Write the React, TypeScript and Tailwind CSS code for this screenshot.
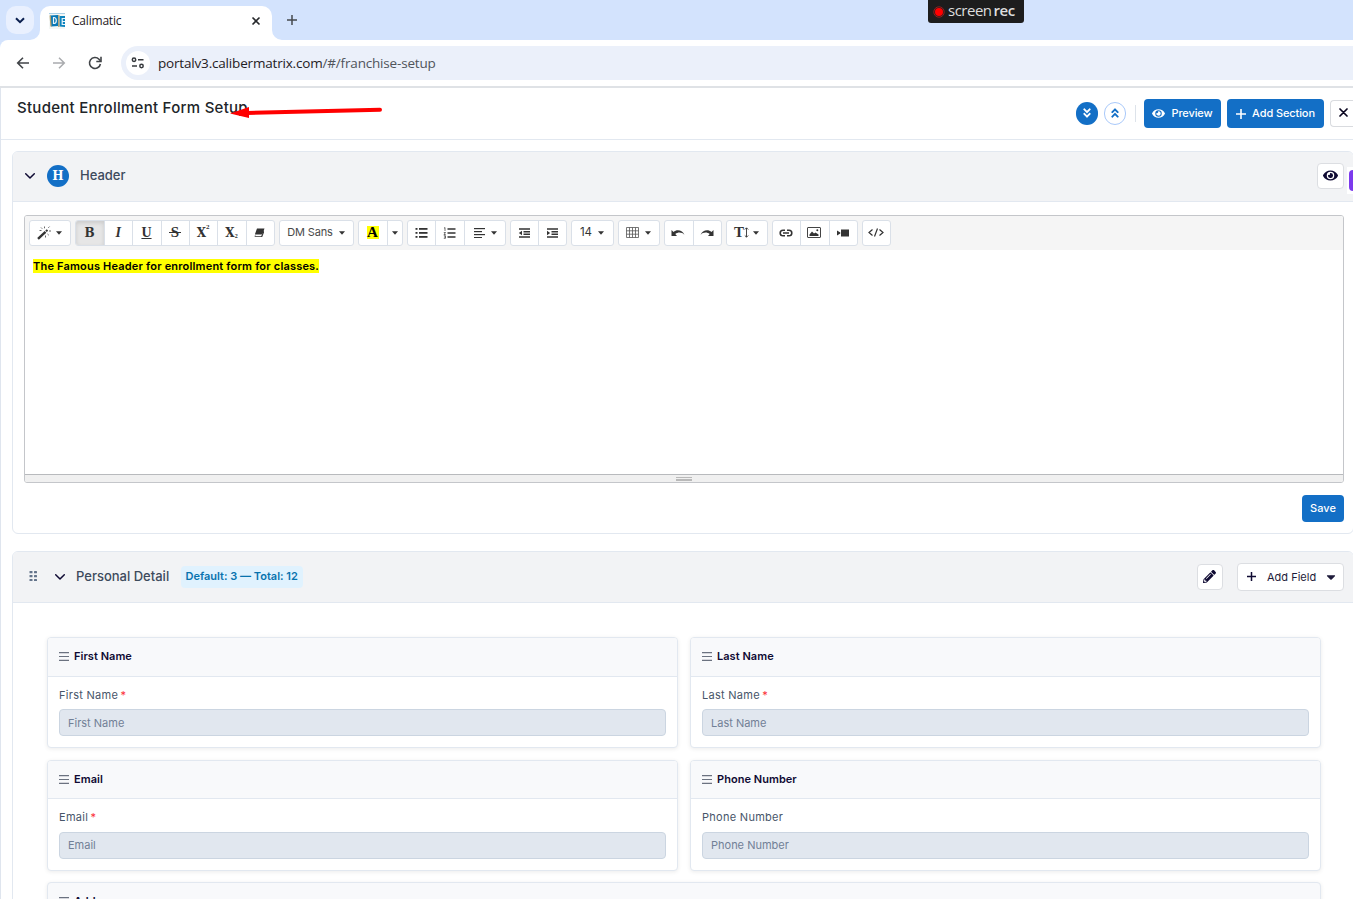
import type { ReactNode } from "react";
import {
  FaEye,
  FaPlus,
  FaPencilAlt,
  FaCaretDown,
  FaAngleDoubleDown,
  FaAngleDoubleUp,
} from "react-icons/fa";

function Caret() {
  return (
    <svg width="6" height="4" viewBox="0 0 6 4" className="shrink-0 text-[#333]">
      <path d="M0 0.200h6L3 3.700z" fill="currentColor" />
    </svg>
  );
}

function Chevron() {
  return (
    <svg width="10" height="6" viewBox="0 0 10 6" fill="none" className="shrink-0">
      <path d="M0.7 0.8 5 5l4.3-4.2" stroke="#0f0a33" strokeWidth="1.5" strokeLinecap="round" strokeLinejoin="round" />
    </svg>
  );
}

function Group({ className, children }: { className: string; children: ReactNode }) {
  return (
    <div className={`flex h-[26px] shrink-0 divide-x divide-[#dae0e8] overflow-hidden rounded-[3px] border border-[#dae0e8] bg-white text-[#333] ${className}`}>
      {children}
    </div>
  );
}

function Tool({ className = "flex-1", children }: { className?: string; children: ReactNode }) {
  return <button className={`flex items-center justify-center pr-px pb-px ${className}`}>{children}</button>;
}

function Lines({ rows, thick = 1.5 }: { rows: number[][]; thick?: number }) {
  return (
    <svg width="13" height="11" viewBox="0 0 13 11">
      {rows.map(([x, y, w], i) => (
        <rect key={i} x={x} y={y} width={w} height={thick} fill="#333" />
      ))}
    </svg>
  );
}

function BrowserBar() {
  return (
    <div className="font-['Open_Sans',sans-serif]">
      <div className="relative flex h-10 bg-[#d3e3fd] pl-1.5">
        <button className="mt-1.5 flex h-7 w-7 items-center justify-center rounded-[10px] bg-[#e9f0fe]">
          <svg width="10" height="7" viewBox="0 0 10 7" fill="none">
            <path d="M1 1.2 5 5.2l4-4" stroke="#0a1f4f" strokeWidth="2" />
          </svg>
        </button>
        <div className="relative mt-1.5 ml-1.5 flex w-[232px] items-center rounded-t-[10px] bg-white pr-[11px] pb-[5px] pl-[9px]">
          <svg width="16" height="16" viewBox="0 0 16 16">
            <rect width="16" height="16" fill="#f4f7f6" />
            <path d="M0 .5h16" stroke="#abd0e6" />
            <path d="M1 2.5 9 2l.5 11L2 13.5z" fill="#0878b6" />
            <path d="M10.5 3H16v11l-5.5-.5z" fill="#0d83bd" />
            <path d="M1.200 2.500 2 13.500M9.800 2v12" stroke="#b7a16c" strokeWidth="1.300" />
            <path d="M4.500 4.500v6h.8q2-.4 2-3T5.300 4.500zM16 5.500h-2.800v6H16M13.200 8.500H16" fill="none" stroke="#e8f5fb" strokeWidth="1.200" />
          </svg>
          <span className="ml-[7px] text-[12px] tracking-[-0.2px] text-[#1f2023]">Calimatic</span>
          <svg className="ml-auto" width="10" height="10" viewBox="0 0 10 10">
            <path d="m1.500 1.500 7 7m0-7-7 7" stroke="#27292c" strokeWidth="1.600" />
          </svg>
          <svg className="absolute -right-2.5 bottom-0" width="10" height="10" viewBox="0 0 10 10">
            <path d="M0 0v10h10A10 10 0 0 1 0 0" fill="#fff" />
          </svg>
          <svg className="absolute bottom-0 -left-2.5" width="10" height="10" viewBox="0 0 10 10">
            <path d="M10 0v10H0A10 10 0 0 0 10 0" fill="#fff" />
          </svg>
        </div>
        <svg className="mt-[15px] ml-[15px]" width="10" height="10" viewBox="0 0 10 10">
          <path d="M5 0v10M0 5h10" stroke="#46494e" strokeWidth="1.500" />
        </svg>
        <div className="absolute top-0 left-[928px] flex h-[23px] w-24 items-center rounded-b-[3px] bg-[#1d1d1d] pl-[5px] text-white">
          <svg width="12" height="12" viewBox="0 0 12 12">
            <circle cx="6" cy="6" r="5.200" fill="none" stroke="#b02020" strokeWidth=".8" />
            <circle cx="6" cy="6" r="4" fill="#f00" />
          </svg>
          <span className="ml-[3px] pb-[2px] text-[15px] leading-none tracking-[-0.5px] text-[#dedede]">
            screen<b className="ml-[2px] font-semibold">rec</b>
          </span>
        </div>
      </div>
      <div className="bg-[#d3e3fd]">
        <div className="flex h-[46px] items-center rounded-tl-[8px] bg-white pl-4">
          <svg width="14" height="14" viewBox="0 0 14 14" fill="none">
            <path d="M13 7H2m5-5.300L1.700 7 7 12.300" stroke="#414448" strokeWidth="1.600" />
          </svg>
          <svg className="ml-[22px]" width="14" height="14" viewBox="0 0 14 14" fill="none">
            <path d="M1 7h11M7 1.700 12.300 7 7 12.300" stroke="#a9abae" strokeWidth="1.500" />
          </svg>
          <svg className="ml-[22px]" width="14" height="14" viewBox="0 0 14 14" fill="none">
            <path d="M12.400 8A5.500 5.500 0 1 1 11 3.200l1.500 1.600" stroke="#414448" strokeWidth="1.600" />
            <path d="M13 .8v4.700H8.300" stroke="#414448" strokeWidth="1.600" />
          </svg>
          <div className="ml-[19px] flex h-[34px] flex-1 items-center rounded-l-full bg-[#ebf0fa] pl-[5px]">
            <div className="flex h-6 w-6 items-center justify-center rounded-full bg-white">
              <svg width="14" height="12" viewBox="0 0 14 12" fill="none" stroke="#36393d" strokeWidth="1.500">
                <circle cx="3" cy="2.700" r="1.700" />
                <path d="M7 2.700h5.500M1 9h5" />
                <circle cx="10.500" cy="9" r="1.700" />
              </svg>
            </div>
            <span className="ml-2 text-[13.500px] tracking-[-0.18px] text-[#1f2023]">
              portalv3.calibermatrix.com<span className="text-[#50545a]">/#/franchise-setup</span>
            </span>
          </div>
        </div>
      </div>
      <div className="h-[2px] bg-[#dfe2e6]" />
    </div>
  );
}

function Toolbar() {
  return (
    <div className="flex h-[34px] gap-1 bg-[#f5f5f5] px-1 pt-1">
      <Group className="w-[42px]">
        <Tool>
          <svg width="15" height="14" viewBox="0 0 15 14">
            <path d="m1 12.800 7.500-7" stroke="#333" strokeWidth="2.400" />
            <path d="m9 5.300 1.500-1.400" stroke="#333" strokeWidth="2" />
            <path d="M7.500.5v1.800M11.300 1.800l1.200-1.200M12 5h2M10.500 8l1.300 1.200M4 1.500l1.200 1.200M8.500 9.500v2M2.500 4.500h2" stroke="#666" strokeWidth="1" />
          </svg>
          <span className="ml-1"><Caret /></span>
        </Tool>
      </Group>
      <Group className="w-[200px] font-['Liberation_Serif',serif] text-[14px] font-bold">
        <Tool className="w-[29px] bg-[#e6e6e6] shadow-[inset_0_2px_4px_rgba(0,0,0,0.12)]">
          <span className="font-['DejaVu_Serif',serif] text-[12px]">B</span>
        </Tool>
        <Tool><i>I</i></Tool>
        <Tool><span className="underline">U</span></Tool>
        <Tool>
          <span className="relative text-[15px]">
            S
            <span className="absolute top-[11px] -left-[2px] h-px w-3 bg-[#333]" />
          </span>
        </Tool>
        <Tool>
          <span className="font-['DejaVu_Serif',serif] text-[12px]">X</span>
          <sup className="-mt-1 text-[7px]">2</sup>
        </Tool>
        <Tool>
          <span className="font-['DejaVu_Serif',serif] text-[12px]">X</span>
          <sub className="mt-1 text-[6px]">2</sub>
        </Tool>
        <Tool>
          <svg width="11" height="10" viewBox="0 0 11 10">
            <path d="M3 .5h7.500L8.500 6H1z" fill="#333" />
            <path d="M1 6.500h7l2-5v3L8.200 9H.700z" fill="#333" />
            <path d="M1.500 7h6.200l-.5 1.300H1z" fill="#fff" />
          </svg>
        </Tool>
      </Group>
      <Group className="w-[75px]">
        <Tool>
          <span className="mr-1.5 text-[11px] tracking-[-0.15px] text-[#4a4a4a]">DM Sans</span>
          <Caret />
        </Tool>
      </Group>
      <Group className="w-[45px]">
        <Tool className="w-[29px]">
          <span className="flex h-[13px] w-3 items-center justify-center bg-[#ff0] font-['Liberation_Serif',serif] text-[15px] font-bold text-black">A</span>
        </Tool>
        <Tool><Caret /></Tool>
      </Group>
      <Group className="w-[99px]">
        <Tool className="w-[28px]">
          <Lines rows={[[0.5, 1, 2], [4, 1, 8.5], [0.5, 5, 2], [4, 5, 8.5], [0.5, 9, 2], [4, 9, 8.5]]} thick={1.800} />
        </Tool>
        <Tool className="w-[29px]">
          <svg width="13" height="12" viewBox="0 0 13 12" fill="none" stroke="#333">
            <path d="M4.500 2h8M4.500 6h8M4.500 10h8" strokeWidth="1.700" />
            <path d="M1 1.300 2 .5V4M.8 5.500h1.700L1 7.500h1.700M.8 8.700h1.700v2.600H.800M1 10h1.500" strokeWidth=".7" />
          </svg>
        </Tool>
        <Tool>
          <Lines rows={[[1, 1, 11], [1, 4, 8], [1, 7, 11], [1, 10, 8]]} thick={1.200} />
          <span className="ml-[5px]"><Caret /></span>
        </Tool>
      </Group>
      <Group className="w-[57px]">
        <Tool>
          <svg width="12" height="10" viewBox="0 0 12 10">
            <path d="M1 1h11M5.500 3.700H12M5.500 6.300H12M1 9h11" stroke="#333" strokeWidth="1.400" />
            <path d="M4 2.800v4.400L.800 5z" fill="#333" />
          </svg>
        </Tool>
        <Tool>
          <svg width="12" height="10" viewBox="0 0 12 10">
            <path d="M1 1h11M5.500 3.700H12M5.500 6.300H12M1 9h11" stroke="#333" strokeWidth="1.400" />
            <path d="M1 2.800v4.400L4.200 5z" fill="#333" />
          </svg>
        </Tool>
      </Group>
      <Group className="w-[43px]">
        <Tool>
          <span className="mr-[6px] text-[11.500px]">14</span>
          <Caret />
        </Tool>
      </Group>
      <Group className="w-[42px]">
        <Tool>
          <svg width="13" height="11" viewBox="0 0 13 11" fill="none" stroke="#555" strokeWidth=".8">
            <path d="M.5.5h12v10H.500zM.5 3.800h12M.5 7.200h12M3.500.5v10M6.500.5v10M9.500.5v10" />
          </svg>
          <span className="ml-1.5"><Caret /></span>
        </Tool>
      </Group>
      <Group className="w-[58px]">
        <Tool>
          <svg width="14" height="8" viewBox="0 0 14 8">
            <path d="M.5 1v6H6L4.300 5.100C7 2.900 11 3 13.500 6 12 1.500 6-.500 2.500 3.100z" fill="#333" />
          </svg>
        </Tool>
        <Tool>
          <svg width="14" height="8" viewBox="0 0 14 8">
            <path d="M13.500 1v6H8l1.700-1.900C7 2.900 3 3 .5 6 2 1.500 8-.500 11.500 3.100z" fill="#333" />
          </svg>
        </Tool>
      </Group>
      <Group className="w-[42px]">
        <Tool>
          <span className="font-['Liberation_Serif',serif] text-[15px] font-bold">T</span>
          <svg width="5" height="11" viewBox="0 0 5 11" fill="none" stroke="#333" strokeWidth=".9">
            <path d="M2.500 1v9M.8 2.500 2.500.8l1.700 1.700M.8 8.500l1.700 1.700 1.700-1.700" />
          </svg>
          <span className="ml-1"><Caret /></span>
        </Tool>
      </Group>
      <Group className="w-[86px]">
        <Tool>
          <svg width="14" height="8" viewBox="0 0 14 8" fill="none" stroke="#333" strokeWidth="1.600">
            <path d="M6 1.200H4a2.800 2.800 0 0 0 0 5.600h2M8 1.200h2a2.800 2.800 0 0 1 0 5.600H8M4 4h6" />
          </svg>
        </Tool>
        <Tool>
          <svg width="14" height="11" viewBox="0 0 14 11">
            <rect x=".5" y=".5" width="13" height="10" rx=".5" fill="none" stroke="#444" />
            <path d="M2.500 9V7.500L5 4.500l2 2 1.500-1 3 2V9z" fill="#333" />
            <circle cx="10.300" cy="3.300" r="1" fill="#333" />
          </svg>
        </Tool>
        <Tool>
          <svg width="12" height="8" viewBox="0 0 12 8">
            <path d="M4 .5h8v7H4zM0 1.500l3.300 2v1L0 6.500z" fill="#333" />
          </svg>
        </Tool>
      </Group>
      <Group className="w-[29px]">
        <Tool>
          <svg width="16" height="9" viewBox="0 0 16 9" fill="none" stroke="#333" strokeWidth="1.200">
            <path d="M4.500 1.500 1 4.500l3.500 3M11.500 1.500l3.500 3-3.500 3M9.500.5l-3 8" />
          </svg>
        </Tool>
      </Group>
    </div>
  );
}

function DragHandle() {
  return (
    <svg width="10" height="9" viewBox="0 0 10 9">
      <path d="M0 .6h10M0 4.500h10M0 8.400h10" stroke="#6b7280" strokeWidth="1.200" />
    </svg>
  );
}

function FieldCard({ label, required, first }: { label: string; required?: boolean; first?: boolean }) {
  return (
    <div className="h-[111px] overflow-hidden rounded-[4px] border border-[#e2e8f0] bg-white shadow-[0_1px_4px_rgba(0,0,0,0.08)]">
      <div className={`flex items-center border-b border-[#e2e8f0] bg-[#f8f9fb] pl-[11px] ${first ? "h-[39px] pb-px" : "h-[38px]"}`}>
        <DragHandle />
        <span className="ml-[5px] text-[11px] font-semibold tracking-[0.04px] text-[#0f0a33]">{label}</span>
      </div>
      <div className="px-[11px] pt-[10px]">
        <div className="h-[17px] text-[11px] leading-[17px] tracking-[0.28px] text-[#475569]">
          {label} {required && <span className="-ml-px text-red-500">*</span>}
        </div>
        <div className={`flex h-[27px] items-center rounded-[4px] border border-[#cbd5e1] bg-[#e1e7ef] pl-2 text-[11px] text-[#718096] ${first ? "mt-[5px] pt-px" : "mt-[6px]"}`}>
          {label}
        </div>
      </div>
    </div>
  );
}

export default function App() {
  return (
    <div className="h-[899px] w-[1353px] overflow-hidden bg-white font-['Inter',sans-serif]">
      <BrowserBar />
      <main className="h-[811px] border-l border-[#dfe5ee]">
        <div className="relative flex h-[52px] border-b border-[#e2e8f0] pl-4">
          <h1 className="mt-[9px] text-[15px] leading-[22px] font-medium tracking-[0.27px] text-[#212529]">Student Enrollment Form Setup</h1>
          <svg className="absolute top-[16px] left-[229px]" width="156" height="18" viewBox="0 0 156 18">
            <path d="M17 9 150 5.800" stroke="#f00" strokeWidth="4" strokeLinecap="round" />
            <path d="M0 9.500 19 3v11z" fill="#f00" />
          </svg>
          <div className="ml-auto flex shrink-0 items-center text-[11px] font-medium">
            <button className="flex h-[23px] w-[22px] items-center justify-center rounded-full bg-[#136fc6] pb-px text-white">
              <FaAngleDoubleDown size={12} />
            </button>
            <button className="ml-1.5 flex h-[23px] w-[22px] items-center justify-center rounded-full border border-[#a9c9fa] pb-0.5 text-[#136fc6]">
              <FaAngleDoubleUp size={12} />
            </button>
            <div className="ml-[9px] h-[17px] w-px bg-[#dde3ea]" />
            <button className="ml-2 flex h-[29px] w-[77px] items-center justify-center gap-[6px] rounded-[4px] bg-[#136fc6] text-white">
              <FaEye size={13} />
              <span className="tracking-[-0.1px]">Preview</span>
            </button>
            <button className="ml-1.5 flex h-[29px] w-[97px] items-center justify-center gap-[6px] rounded-[4px] bg-[#136fc6] text-white">
              <svg width="10" height="10" viewBox="0 0 10 10">
                <path d="M5 .3v9.400M.3 5h9.400" stroke="#fff" strokeWidth="1.600" strokeLinecap="round" />
              </svg>
              <span className="tracking-[-0.1px]">Add Section</span>
            </button>
            <button className="ml-1.5 flex h-[27px] w-[23px] items-center rounded-l-[4px] border border-r-0 border-[#d9dbdf] pb-[2px] pl-[8px] text-[#0a0620]">
              <svg width="9" height="9" viewBox="0 0 9 9">
                <path d="m1 1 7 7m0-7L1 8" stroke="currentColor" strokeWidth="1.700" strokeLinecap="round" />
              </svg>
            </button>
          </div>
        </div>

        <section className="mt-[11px] ml-[11px] h-[383px] w-[1342px] rounded-[6px] border border-[#e2e8f0]">
          <div className="relative flex h-[50px] items-center rounded-t-[5px] border-b border-[#e2e8f0] bg-[#f2f3f5] pb-px pl-3">
            <Chevron />
            <span className="ml-[12px] flex h-[22px] w-[22px] items-center justify-center rounded-full bg-[#136fc6] font-['DejaVu_Serif',serif] text-[12px] font-bold text-white">H</span>
            <h2 className="ml-[11px] text-[13px] font-medium text-[#3d4a5c]">Header</h2>
            <button className="mr-[9px] ml-auto flex h-[26px] w-[27px] items-center justify-center rounded-[4px] border border-[#dcdee2] bg-white pb-px text-[#0f0a33]">
              <FaEye size={15} />
            </button>
            <div className="absolute top-[15px] right-0 h-[27px] w-[6px] bg-white pt-[3px] pl-[2px]">
              <div className="h-[21px] rounded-l-[4px] bg-[#7c3aed]" />
            </div>
          </div>
          <div className="mt-[13px] ml-[11px] w-[1320px] overflow-hidden rounded-[3px] border border-[#c4c6ca]">
            <Toolbar />
            <div className="h-[224px] pt-[9px] pl-2 text-[11px] leading-[14px] font-semibold tracking-[0.19px] text-black">
              <span className="bg-[#ff0]">The Famous Header for enrollment form for classes.</span>
            </div>
            <div className="flex h-[8px] flex-col items-center gap-px border-t border-[#b8babd] bg-[#f0f0f0] pt-[2px]">
              <div className="h-px w-4 bg-[#b9b9b9]" />
              <div className="h-[2px] w-4 bg-[#b9b9b9]" />
            </div>
          </div>
          <div className="mt-3 mr-[9px] flex justify-end">
            <button className="h-[27px] w-[42px] rounded-[4px] bg-[#136fc6] text-[11px] font-medium text-white">Save</button>
          </div>
        </section>

        <section className="mt-[17px] ml-[11px] h-[400px] w-[1342px] rounded-[6px] border border-[#e2e8f0]">
          <div className="flex h-[51px] items-center rounded-t-[5px] border-b border-[#e2e8f0] bg-[#f2f3f5] pl-4">
            <svg width="8" height="10" viewBox="0 0 8 10" className="mb-0.5">
              {[0, 4, 8].map((y) => (
                <g key={y} fill="#64748b">
                  <rect x="0.500" y={y} width="3" height="2.300" rx=".5" />
                  <rect x="5" y={y} width="3" height="2.300" rx=".5" />
                </g>
              ))}
            </svg>
            <span className="ml-[18px] flex"><Chevron /></span>
            <h2 className="ml-[11px] text-[13px] font-medium text-[#3d4a5c]">Personal Detail</h2>
            <span className="mb-px ml-3 flex h-[22px] w-[122px] items-center justify-center rounded-[4px] bg-[#e0f2fe] pr-px text-[11px] font-semibold text-[#0873ae]">
              Default: 3 — Total: 12
            </span>
            <button className="ml-auto flex h-[26px] w-[26px] items-center justify-center rounded-[4px] border border-[#dcdee2] bg-white pr-px pb-px text-[#0f0a33]">
              <FaPencilAlt size={13} />
            </button>
            <button className="mr-[9px] ml-[14px] flex h-7 w-[107px] items-center rounded-[4px] border border-[#dcdee2] bg-white pl-[9px] text-[11px] text-[#1e1b3a]">
              <svg width="9" height="9" viewBox="0 0 9 9" className="mb-0.5">
                <path d="M4.500 .3v8.400M.3 4.500h8.400" stroke="#0f0a33" strokeWidth="1.500" strokeLinecap="round" />
              </svg>
              <span className="ml-[11px]">Add Field</span>
              <FaCaretDown size={14} className="mr-[5px] mb-px ml-auto" />
            </button>
          </div>
          <div className="grid grid-cols-[631px_631px] gap-x-3 gap-y-[12px] pt-[34px] pl-[34px]">
            <FieldCard label="First Name" required first />
            <FieldCard label="Last Name" required first />
            <FieldCard label="Email" required />
            <FieldCard label="Phone Number" />
            <div className="col-span-2 -mt-px h-[111px] rounded-[4px] border border-[#e2e8f0] bg-[#f8f9fb] shadow-[0_1px_4px_rgba(0,0,0,0.08)]">
              <div className="flex h-[37px] items-center pl-[11px]">
                <DragHandle />
                <span className="ml-[5px] text-[11px] font-semibold text-[#0f0a33]">Address</span>
              </div>
            </div>
          </div>
        </section>
      </main>
    </div>
  );
}
